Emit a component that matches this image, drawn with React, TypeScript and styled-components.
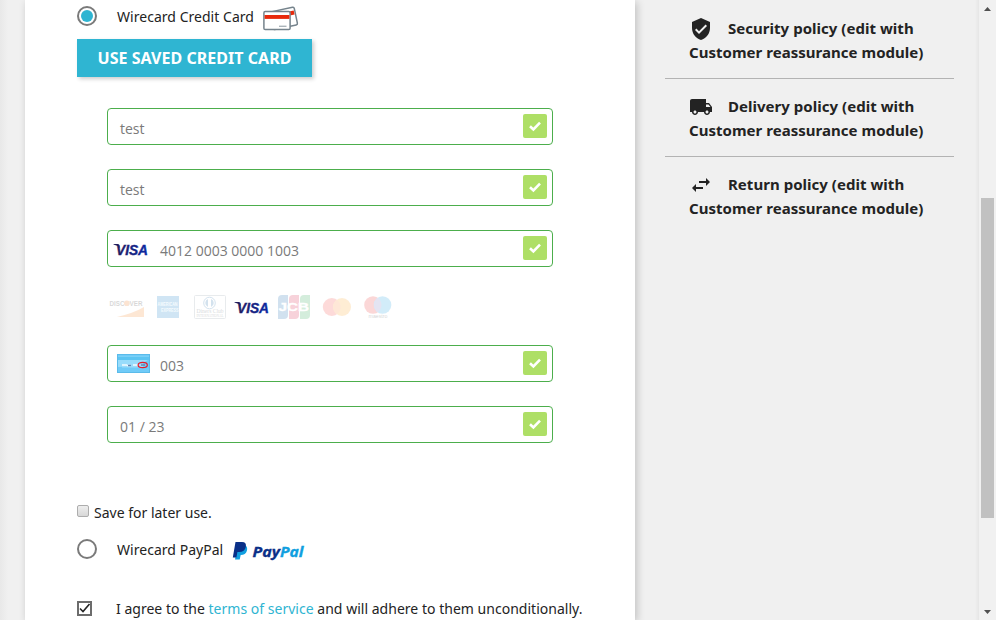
import React from "react";
import styled, { createGlobalStyle } from "styled-components";

const GlobalStyle = createGlobalStyle`
  * { box-sizing: border-box; }
  html, body { margin: 0; height: 100%; overflow: hidden; background: #f0f0f0; }
  body { font-family: "Noto Sans", sans-serif; font-size: 14px; color: #232323; }
  svg { display: block; flex: none; overflow: visible; }
`;

const Page = styled.div`
  display: flex;
  width: 996px;
  height: 620px;
  overflow: hidden;
  background: #f0f0f0;
`;

const Gutter = styled.div`
  width: 25px;
  flex: none;
  background: linear-gradient(to right, #e8e8e8, #f0f0f0 8px);
`;

const Panel = styled.main`
  width: 610px;
  flex: none;
  display: flex;
  flex-direction: column;
  padding-left: 52px;
  background: #fff;
  box-shadow: 2px 2px 8px rgba(0, 0, 0, 0.2);
`;

const OptionRow = styled.label<{ $height: number; $top?: number }>`
  display: flex;
  align-items: center;
  flex: none;
  height: ${(p) => p.$height}px;
  margin-top: ${(p) => p.$top ?? 0}px;
`;

const Radio = styled.span<{ $on?: boolean }>`
  width: 20px;
  height: 20px;
  flex: none;
  border: 2px solid #7a7a7a;
  border-radius: 50%;
  background: ${(p) => (p.$on ? "#2fb5d2" : "#fff")};
  background-clip: content-box;
  padding: 2px;
  margin: -1px 20px 0 0;
`;

const OptionText = styled.span<{ $gap: number }>`
  line-height: 22px;
  letter-spacing: 0.03px;
  white-space: nowrap;
  margin-right: ${(p) => p.$gap}px;
`;

const SavedButton = styled.button`
  width: 235px;
  height: 38px;
  flex: none;
  margin: 6px 0 31px;
  padding: 0;
  border: 0;
  background: #2fb5d2;
  color: #fff;
  font: 700 16px/38px "Noto Sans", sans-serif;
  letter-spacing: 0.04px;
  text-transform: uppercase;
  white-space: nowrap;
  box-shadow: 2px 2px 4px rgba(0, 0, 0, 0.2);
`;

const CardForm = styled.section`
  width: 446px;
  flex: none;
  margin-left: 30px;
`;

const Field = styled.div<{ $iconPad?: boolean }>`
  display: flex;
  align-items: center;
  height: 37px;
  margin-bottom: 24px;
  padding: 0 5px 2px ${(p) => (p.$iconPad ? 6 : 12)}px;
  border: 1px solid #4cae4c;
  border-radius: 4px;
  background: #fff;
`;

const FieldIcon = styled.span`
  width: 46px;
  flex: none;
`;

const FieldValue = styled.span`
  flex: 1;
  padding-top: 7px;
  color: #7a7a7a;
  font: 14px/20px "Open Sans", sans-serif;
`;

const ValidMark = styled.span`
  width: 24px;
  height: 24px;
  border-radius: 2px;
  background: #aedf66;
`;

const Brands = styled.div`
  display: flex;
  align-items: center;
  height: 24px;
  margin: 28px 0 26px;
`;

const Brand = styled.span<{ $width: number; $gap: number; $active?: boolean }>`
  width: ${(p) => p.$width}px;
  margin-right: ${(p) => p.$gap}px;
  opacity: ${(p) => (p.$active ? 1 : 0.19)};
`;

const SaveRow = styled.label`
  display: flex;
  align-items: center;
  gap: 5px;
  flex: none;
  height: 24px;
  margin-top: 33px;
`;

const NativeBox = styled.span`
  width: 12px;
  height: 12px;
  margin-bottom: 2px;
  border: 1px solid #adadad;
  border-radius: 2px;
  background: linear-gradient(#eee, #d8d8d8);
`;

const AgreeRow = styled.label`
  display: flex;
  align-items: center;
  flex: none;
  height: 24px;
  margin-top: 22px;
  white-space: nowrap;
`;

const CheckedBox = styled.span`
  width: 15px;
  height: 15px;
  margin-right: 24px;
  border: 2px solid #6c6c6c;
`;

const AgreeText = styled.span`
  letter-spacing: 0.02px;
`;

const TermsLink = styled.a`
  color: #2fb5d2;
`;

const Sidebar = styled.aside`
  width: 289px;
  flex: none;
  margin-left: 30px;
`;

const Policy = styled.div`
  display: flow-root;
  height: 78px;
  padding: 15px 24px 0;
  border-bottom: 1px solid #b3b3b3;
  color: #232323;
  font-size: 15px;
  font-weight: 700;
  line-height: 24px;
  letter-spacing: 0.03px;
  white-space: nowrap;

  &:first-child { height: 79px; padding-top: 16px; }
  &:last-child { border: 0; }
`;

const PolicyHead = styled.div`
  display: flex;
  align-items: center;
  height: 24px;
  gap: 15px;
`;

const PolicyIcon = styled.svg`
  fill: #232323;
  margin-top: 2px;
`;

const RightEdge = styled.div`
  width: 4px;
  flex: none;
  margin-left: 21px;
  background: linear-gradient(to right, #f0f0f0, #e6e6e6);
`;

const Scrollbar = styled.div`
  width: 17px;
  flex: none;
  display: flex;
  flex-direction: column;
  align-items: center;
  background: #f1f1f1;
  padding: 7px 0 6px;
`;

const Thumb = styled.div`
  width: 13px;
  height: 320px;
  margin: 187px 0 92px;
  background: #c1c1c1;
`;

const CheckGlyph = () => (
  <svg width="24" height="24" viewBox="0 0 24 24">
    <path d="M7 12.300 10.400 15.500 17 8.700" fill="none" stroke="#fff" strokeWidth="2.600" />
  </svg>
);

const VisaLogo = () => (
  <svg width="34" height="18" viewBox="0 0 34 18">
    <defs>
      <linearGradient id="visa" x1="0" x2="1" y1="0" y2="0">
        <stop offset="0" stopColor="#211c5c" />
        <stop offset="1" stopColor="#0a2aa6" />
      </linearGradient>
    </defs>
    <path d="M-.5 4h5l1.600 4Q3.500 5 -.5 4.500z" fill="#211c5c" />
    <text x="2" y="14.700" textLength="32" lengthAdjust="spacingAndGlyphs" fontFamily="Liberation Sans" fontWeight="700" fontStyle="italic" fontSize="15.300" fill="url(#visa)" stroke="url(#visa)" strokeWidth=".4">VISA</text>
  </svg>
);

const CreditCards = () => (
  <svg width="36" height="26" viewBox="0 0 36 26">
    <g transform="translate(0 2)">
      <g transform="rotate(-12 20 12)">
        <rect x="8" y="3.500" width="25" height="18" rx="1.500" fill="#fff" stroke="#75838c" strokeWidth="1.500" />
        <path d="M9 7h23v4H9z" fill="#e8290b" />
      </g>
      <rect x=".9" y="5.600" width="26.200" height="18" rx="1.300" fill="#fff" stroke="#75838c" strokeWidth="1.500" />
      <path d="M1.600 9h24.800v3.900H1.600z" fill="#e8290b" />
      <path d="M16 20.300h7.500" stroke="#aab3b9" strokeWidth="1.400" />
    </g>
  </svg>
);

const CvvCard = () => (
  <svg width="33" height="19" viewBox="0 0 33 19">
    <rect width="33" height="19" fill="#70cbf8" />
    <path d="M0 7V2h33v2Q26 12 0 13z" fill="#98dcfb" />
    <path d="M0 2.500h33v3.500H0z" fill="#5cc4f2" />
    <path d="M5 9.500h21v4H5z" fill="#9bdcfb" />
    <path d="M5 11h5M10 11.500h4M16 11h5" stroke="#f4fbff" strokeWidth="1.500" />
    <path d="M11 11.500h3M24 11h4" stroke="#6688b4" strokeWidth="1.400" />
    <ellipse cx="25.700" cy="11" rx="4.600" ry="2.700" fill="none" stroke="#e61b2b" strokeWidth="1.200" />
    <rect x=".5" y=".5" width="32" height="18" fill="none" stroke="#5bbbea" />
  </svg>
);

const DiscoverLogo = () => (
  <svg width="36" height="24" viewBox="0 0 36 24">
    <text x="2.500" y="11" textLength="33" lengthAdjust="spacingAndGlyphs" fontFamily="Liberation Sans" fontWeight="700" fontSize="7.500" fill="#333">DISCOVER</text>
    <circle cx="19.800" cy="8.300" r="2.800" fill="#f47216" />
    <path d="M37 12v10H10Q27 18 37 12z" fill="#f58220" />
  </svg>
);

const AmexLogo = () => (
  <svg width="22" height="22" viewBox="0 0 22 22">
    <path d="M0 0h22v22H0z" fill="#0b7cc9" />
    <g fontFamily="Liberation Sans" fontWeight="700" fontSize="5" fill="#d4ebf9">
      <text x=".5" y="10" textLength="20" lengthAdjust="spacingAndGlyphs">AMERICAN</text>
      <text x="4" y="15.500" textLength="17.500" lengthAdjust="spacingAndGlyphs">EXPRESS</text>
    </g>
  </svg>
);

const DinersLogo = () => (
  <svg width="32" height="24" viewBox="0 0 32 24">
    <rect x=".5" y=".5" width="31" height="23" rx="1" fill="#fff" stroke="#8b98a2" />
    <circle cx="15.500" cy="8" r="5.800" fill="#fff" stroke="#1b69a8" />
    <path d="M14 4v8a4.300 4.300 0 0 1 0-8zM17 4v8a4.300 4.300 0 0 0 0-8z" fill="#1b69a8" />
    <g fontFamily="Liberation Serif" fill="#26323c">
      <text x="2.500" y="18.300" fontSize="6" textLength="27" lengthAdjust="spacingAndGlyphs">Diners Club</text>
      <text x="2.500" y="21.700" fontSize="3.300" textLength="27" lengthAdjust="spacingAndGlyphs">INTERNATIONAL</text>
    </g>
  </svg>
);

const JcbLogo = () => (
  <svg width="32" height="24" viewBox="0 0 32 24">
    <path d="M4 0h6v20q0 4-4 4H0V4q0-4 4-4z" fill="#1066ad" />
    <path d="M15 0h6v20q0 4-4 4h-6V4q0-4 4-4z" fill="#d8153f" />
    <path d="M26 0h6v20q0 4-4 4h-6V4q0-4 4-4z" fill="#20a34a" />
    <text x=".5" y="15.800" fontFamily="Liberation Sans" fontWeight="700" fontSize="10.500" textLength="30.500" lengthAdjust="spacingAndGlyphs" fill="#fff" stroke="#fff" strokeWidth=".3">JCB</text>
  </svg>
);

const MastercardLogo = () => (
  <svg width="30" height="24" viewBox="0 0 30 24">
    <circle cx="9.800" cy="12" r="9" fill="#f5413b" />
    <circle cx="20" cy="12" r="9" fill="#fca322" />
    <path d="M14.900 4.700a9 9 0 0 1 0 14.600 9 9 0 0 1 0-14.600z" fill="#fb8630" />
  </svg>
);

const MaestroLogo = () => (
  <svg width="28" height="24" viewBox="0 0 28 24">
    <circle cx="10" cy="10" r="8.800" fill="#ee3030" />
    <circle cx="19.500" cy="10" r="8.800" fill="#179fe3" />
    <path d="M14.750 2.800a8.800 8.800 0 0 1 0 14.400 8.800 8.800 0 0 1 0-14.400z" fill="#7673c0" />
    <text x="5.500" y="22.700" fontFamily="Liberation Sans" fontSize="4.500" textLength="19" lengthAdjust="spacingAndGlyphs" fill="#222">maestro</text>
  </svg>
);

const PayPalLogo = () => (
  <svg width="74" height="20" viewBox="0 0 74 20">
    <g transform="translate(0 1.500)">
      <path d="M6 4h7.500q2.500 1.700 1.300 5.500Q13.700 13.500 8.700 13.500l-1 4.500H3z" fill="#109fe0" />
      <path d="M3.500 .5H10q4.800 0 3.800 5Q12.700 10.500 7.200 10.500H5.400l-1 5.500H.8z" fill="#0a3088" />
      <g fontFamily="Open Sans" fontWeight="700" fontStyle="italic" fontSize="13.500" strokeWidth=".3">
        <text x="20.500" y="15" textLength="27.500" lengthAdjust="spacingAndGlyphs" fill="#0a3088" stroke="#0a3088">Pay</text>
        <text x="48" y="15" textLength="23.500" lengthAdjust="spacingAndGlyphs" fill="#109fe0" stroke="#109fe0">Pal</text>
      </g>
    </g>
  </svg>
);

const policies = [
  {
    name: "Security",
    path: "M12 1 3 5v6c0 5.550 3.840 10.740 9 12 5.160-1.260 9-6.450 9-12V5l-9-4zm-2 16-4-4 1.410-1.410L10 14.170l6.590-6.590L18 9l-8 8z",
  },
  {
    name: "Delivery",
    path: "M20 8h-3V4H3c-1.100 0-2 .9-2 2v11h2c0 1.660 1.340 3 3 3s3-1.340 3-3h6c0 1.660 1.340 3 3 3s3-1.340 3-3h2v-5l-3-4zM6 18.500c-.83 0-1.500-.67-1.500-1.500s.67-1.500 1.500-1.500 1.500.67 1.500 1.500-.67 1.500-1.500 1.500zm13.500-9 1.960 2.500H17V9.500h2.500zm-1.500 9c-.83 0-1.500-.67-1.500-1.500s.67-1.500 1.500-1.500 1.500.67 1.500 1.500-.67 1.500-1.500 1.500z",
  },
  {
    name: "Return",
    path: "M6.990 11 3 15l3.990 4v-3H14v-2H6.990v-3zM21 9l-3.990-4v3H10v2h7.010v3L21 9z",
  },
];

const ValidField = ({ value, icon }: { value: string; icon?: React.ReactNode }) => (
  <Field $iconPad={!!icon}>
    {icon && <FieldIcon>{icon}</FieldIcon>}
    <FieldValue>{value}</FieldValue>
    <ValidMark><CheckGlyph /></ValidMark>
  </Field>
);

const VisaIconSlot = styled.span`
  display: block;
  padding-top: 2px;
`;

const CvvIconSlot = styled.span`
  display: block;
  padding: 1px 0 0 3px;
`;

export default function App() {
  return (
    <>
      <GlobalStyle />
      <Page>
        <Gutter />
        <Panel>
          <OptionRow $height={33}>
            <Radio $on />
            <OptionText $gap={9}>Wirecard Credit Card</OptionText>
            <CreditCards />
          </OptionRow>
          <SavedButton>Use saved credit card</SavedButton>
          <CardForm>
            <ValidField value="test" />
            <ValidField value="test" />
            <ValidField value="4012 0003 0000 1003" icon={<VisaIconSlot><VisaLogo /></VisaIconSlot>} />
            <Brands>
              <Brand $width={36} $gap={14}><DiscoverLogo /></Brand>
              <Brand $width={22} $gap={15}><AmexLogo /></Brand>
              <Brand $width={32} $gap={9}><DinersLogo /></Brand>
              <Brand $width={34} $gap={9} $active><VisaLogo /></Brand>
              <Brand $width={32} $gap={12}><JcbLogo /></Brand>
              <Brand $width={30} $gap={11}><MastercardLogo /></Brand>
              <Brand $width={28} $gap={0}><MaestroLogo /></Brand>
            </Brands>
            <ValidField value="003" icon={<CvvIconSlot><CvvCard /></CvvIconSlot>} />
            <ValidField value="01 / 23" />
          </CardForm>
          <SaveRow>
            <NativeBox />
            <span>Save for later use.</span>
          </SaveRow>
          <OptionRow $height={49} $top={1}>
            <Radio />
            <OptionText $gap={9}>Wirecard PayPal</OptionText>
            <PayPalLogo />
          </OptionRow>
          <AgreeRow>
            <CheckedBox>
              <svg width="11" height="11" viewBox="0 0 11 11">
                <path d="M1 5.500 4 8.500 10.500 1" fill="none" stroke="#232323" strokeWidth="1.600" />
              </svg>
            </CheckedBox>
            <AgreeText>
              I agree to the <TermsLink>terms of service</TermsLink> and will adhere to them unconditionally.
            </AgreeText>
          </AgreeRow>
        </Panel>
        <Sidebar>
          {policies.map((p) => (
            <Policy key={p.name}>
              <PolicyHead>
                <PolicyIcon width="24" height="24" viewBox="0 0 24 24"><path d={p.path} /></PolicyIcon>
                <span>{p.name} policy (edit with</span>
              </PolicyHead>
              Customer reassurance module)
            </Policy>
          ))}
        </Sidebar>
        <RightEdge />
        <Scrollbar>
          <svg width="7" height="4" viewBox="0 0 7 4"><path d="M0 4 3.500 0 7 4z" fill="#505050" /></svg>
          <Thumb />
          <svg width="7" height="4" viewBox="0 0 7 4"><path d="M0 0 3.500 4 7 0z" fill="#505050" /></svg>
        </Scrollbar>
      </Page>
    </>
  );
}
